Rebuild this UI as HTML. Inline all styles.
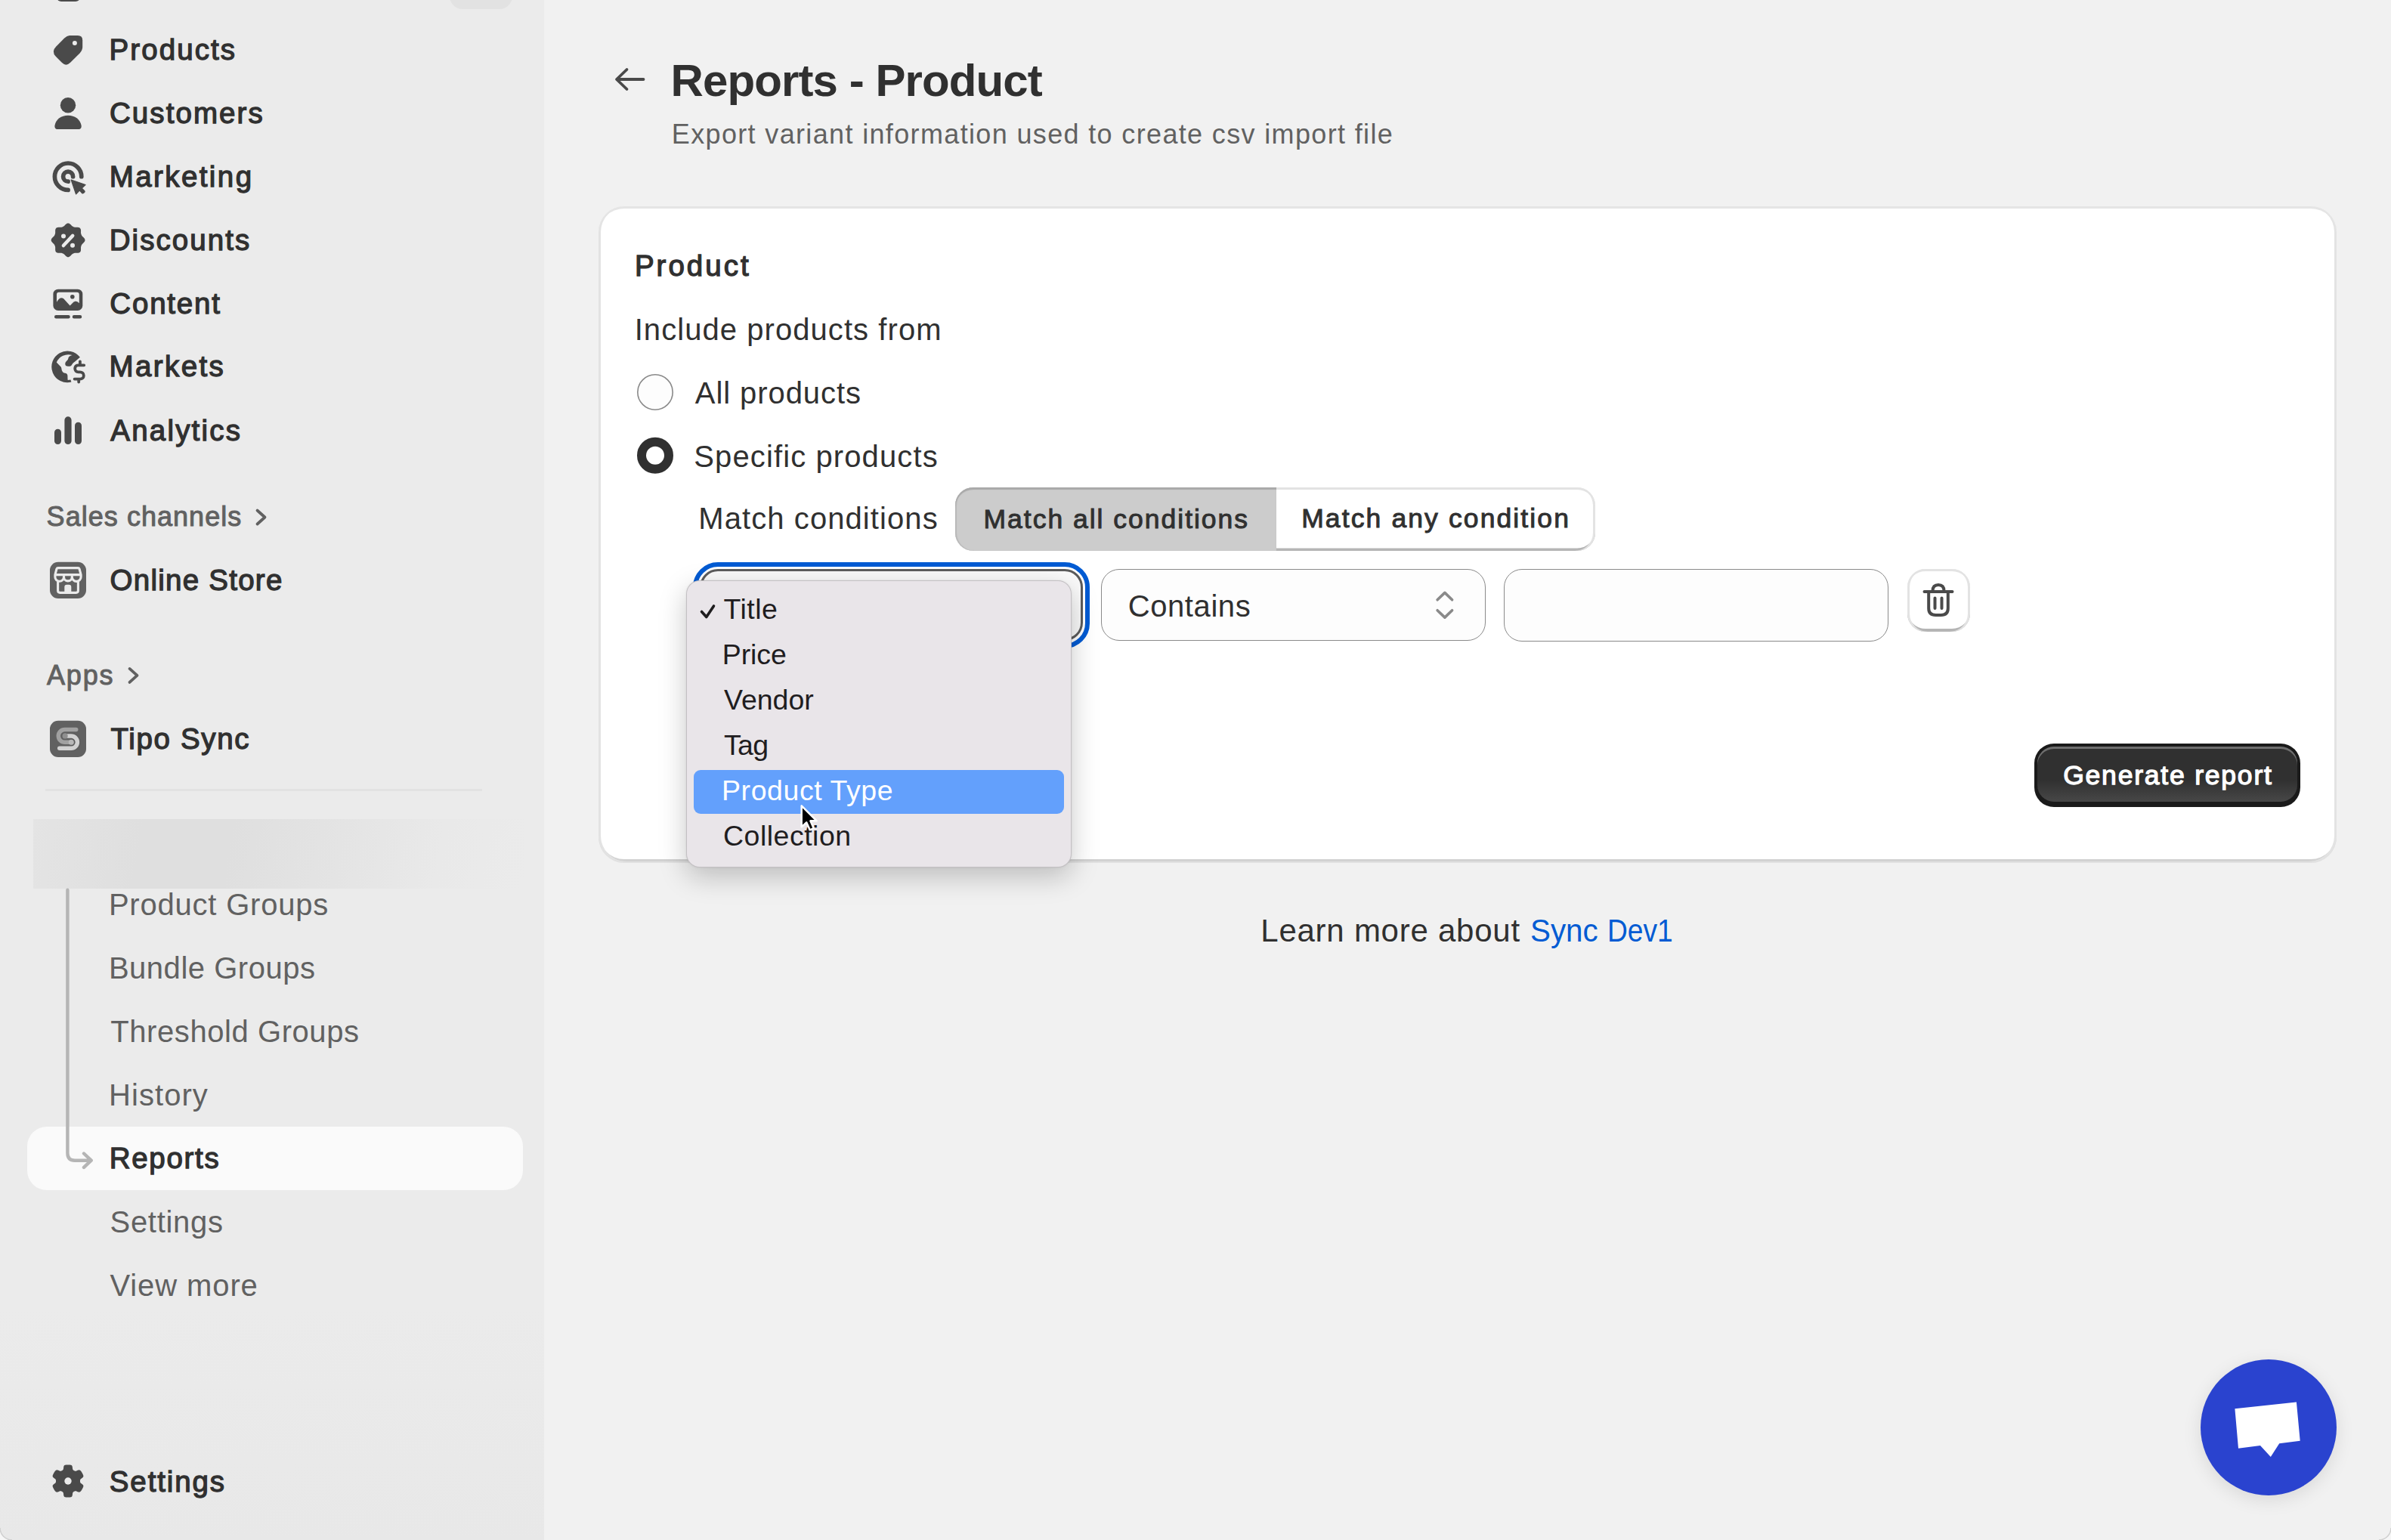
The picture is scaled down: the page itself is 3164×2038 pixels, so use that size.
<!DOCTYPE html>
<html><head><meta charset="utf-8">
<style>
html,body{margin:0;padding:0}
body{width:3164px;height:2038px;overflow:hidden;position:relative;background:#f1f1f1;font-family:"Liberation Sans",sans-serif}
.a{position:absolute;box-sizing:border-box}
.t{position:absolute;white-space:pre;line-height:1;font-family:"Liberation Sans",sans-serif}
.ov{position:absolute;left:0;top:0;overflow:visible}
</style></head><body>
<div class=a style="left:0;top:0;width:720px;height:2038px;background:linear-gradient(#ebebeb 0%,#ebebeb 85%,#e8e8e8 100%)"></div>
<!-- divider -->
<div class=a style="left:60.4px;top:1043.6px;width:577.2px;height:3px;background:#e2e2e2"></div>
<!-- blurred block -->
<div class=a style="left:44px;top:1084px;width:649px;height:91.5px;background:linear-gradient(100deg,#e4e4e4 0%,#dfdfdf 22%,#dfdfdf 40%,#e4e4e4 62%,#e9e9e9 82%,#ebebeb 100%)"></div>
<!-- reports highlight -->
<div class=a style="left:36.3px;top:1491.2px;width:655.7px;height:83.8px;border-radius:26px;background:#fafafa"></div>
<svg class=ov width="720" height="2038" viewBox="0 0 720 2038">
<rect x="75" y="-20" width="31" height="22" rx="6" fill="#4a4a4a"/>
<rect x="595" y="-22" width="83" height="34" rx="17" fill="#e2e2e2"/>
<path d="M92 47.1 L103 47.1 Q109.2 47.1 109.2 53.3 L109.2 62 Q109.2 66.7 105.5 70.4 L93.1 82.8 Q87.45 88.45 81.8 82.8 L74.1 75.1 Q67.4 68.4 74.1 61.7 L85.2 50.6 Q88.7 47.1 92 47.1 Z" fill="#4a4a4a"/>
<circle cx="98.9" cy="56.9" r="3" fill="#ebebeb"/>
<circle cx="90" cy="139.3" r="10.2" fill="#4a4a4a"/>
<path d="M72.5 166 C74 158 81 152.8 90 152.8 C99 152.8 106 158 107.6 166 C108.2 169 106.5 171 104 171 L76 171 C73.5 171 72 169 72.5 166 Z" fill="#4a4a4a"/>
<path d="M107.8 233.7 A17.7 17.7 0 1 0 90.1 251.4" fill="none" stroke="#4a4a4a" stroke-width="5.7" stroke-linecap="round"/>
<path d="M96.6 233.7 A6.5 6.5 0 1 0 90.1 240.2" fill="none" stroke="#4a4a4a" stroke-width="5.7" stroke-linecap="round"/>
<path d="M94.2 238 L113 244.6 L108.3 249.1 L111.8 252.8 Q112.4 253.6 111.6 254.4 L110.2 255.6 Q109.4 256.2 108.7 255.5 L105.3 251.9 L100.6 256.9 Z" fill="#4a4a4a" stroke="#4a4a4a" stroke-width="1.3" stroke-linejoin="round"/>
<path d="M112.50,317.80 L112.44,318.39 L112.28,318.96 L112.02,319.52 L111.67,320.07 L111.26,320.59 L110.80,321.08 L110.33,321.55 L109.85,322.00 L109.41,322.43 L108.99,322.86 L108.63,323.29 L108.32,323.72 L108.06,324.16 L107.85,324.61 L107.65,325.07 L107.47,325.53 L107.30,326.00 L107.17,326.50 L107.09,327.02 L107.04,327.58 L107.03,328.17 L107.04,328.80 L107.05,329.45 L107.06,330.12 L107.03,330.79 L106.95,331.45 L106.82,332.08 L106.61,332.66 L106.31,333.19 L105.94,333.64 L105.49,334.01 L104.96,334.31 L104.38,334.52 L103.75,334.65 L103.09,334.73 L102.42,334.76 L101.75,334.75 L101.10,334.74 L100.47,334.73 L99.88,334.74 L99.32,334.79 L98.80,334.87 L98.30,335.00 L97.83,335.17 L97.37,335.35 L96.91,335.55 L96.46,335.76 L96.02,336.02 L95.59,336.33 L95.16,336.69 L94.73,337.11 L94.30,337.55 L93.85,338.03 L93.38,338.50 L92.89,338.96 L92.37,339.37 L91.82,339.72 L91.26,339.98 L90.69,340.14 L90.10,340.20 L89.51,340.14 L88.94,339.98 L88.38,339.72 L87.83,339.37 L87.31,338.96 L86.82,338.50 L86.35,338.03 L85.90,337.55 L85.47,337.11 L85.04,336.69 L84.61,336.33 L84.18,336.02 L83.74,335.76 L83.29,335.55 L82.83,335.35 L82.37,335.17 L81.90,335.00 L81.40,334.87 L80.88,334.79 L80.32,334.74 L79.73,334.73 L79.10,334.74 L78.45,334.75 L77.78,334.76 L77.11,334.73 L76.45,334.65 L75.82,334.52 L75.24,334.31 L74.71,334.01 L74.26,333.64 L73.89,333.19 L73.59,332.66 L73.38,332.08 L73.25,331.45 L73.17,330.79 L73.14,330.12 L73.15,329.45 L73.16,328.80 L73.17,328.17 L73.16,327.58 L73.11,327.02 L73.03,326.50 L72.90,326.00 L72.73,325.53 L72.55,325.07 L72.35,324.61 L72.14,324.16 L71.88,323.72 L71.57,323.29 L71.21,322.86 L70.79,322.43 L70.35,322.00 L69.87,321.55 L69.40,321.08 L68.94,320.59 L68.53,320.07 L68.18,319.52 L67.92,318.96 L67.76,318.39 L67.70,317.80 L67.76,317.21 L67.92,316.64 L68.18,316.08 L68.53,315.53 L68.94,315.01 L69.40,314.52 L69.87,314.05 L70.35,313.60 L70.79,313.17 L71.21,312.74 L71.57,312.31 L71.88,311.88 L72.14,311.44 L72.35,310.99 L72.55,310.53 L72.73,310.07 L72.90,309.60 L73.03,309.10 L73.11,308.58 L73.16,308.02 L73.17,307.43 L73.16,306.80 L73.15,306.15 L73.14,305.48 L73.17,304.81 L73.25,304.15 L73.38,303.52 L73.59,302.94 L73.89,302.41 L74.26,301.96 L74.71,301.59 L75.24,301.29 L75.82,301.08 L76.45,300.95 L77.11,300.87 L77.78,300.84 L78.45,300.85 L79.10,300.86 L79.73,300.87 L80.32,300.86 L80.88,300.81 L81.40,300.73 L81.90,300.60 L82.37,300.43 L82.83,300.25 L83.29,300.05 L83.74,299.84 L84.18,299.58 L84.61,299.27 L85.04,298.91 L85.47,298.49 L85.90,298.05 L86.35,297.57 L86.82,297.10 L87.31,296.64 L87.83,296.23 L88.38,295.88 L88.94,295.62 L89.51,295.46 L90.10,295.40 L90.69,295.46 L91.26,295.62 L91.82,295.88 L92.37,296.23 L92.89,296.64 L93.38,297.10 L93.85,297.57 L94.30,298.05 L94.73,298.49 L95.16,298.91 L95.59,299.27 L96.02,299.58 L96.46,299.84 L96.91,300.05 L97.37,300.25 L97.83,300.43 L98.30,300.60 L98.80,300.73 L99.32,300.81 L99.88,300.86 L100.47,300.87 L101.10,300.86 L101.75,300.85 L102.42,300.84 L103.09,300.87 L103.75,300.95 L104.38,301.08 L104.96,301.29 L105.49,301.59 L105.94,301.96 L106.31,302.41 L106.61,302.94 L106.82,303.52 L106.95,304.15 L107.03,304.81 L107.06,305.48 L107.05,306.15 L107.04,306.80 L107.03,307.43 L107.04,308.02 L107.09,308.58 L107.17,309.10 L107.30,309.60 L107.47,310.07 L107.65,310.53 L107.85,310.99 L108.06,311.44 L108.32,311.88 L108.63,312.31 L108.99,312.74 L109.41,313.17 L109.85,313.60 L110.33,314.05 L110.80,314.52 L111.26,315.01 L111.67,315.53 L112.02,316.08 L112.28,316.64 L112.44,317.21 Z" fill="#4a4a4a"/>
<circle cx="84" cy="312.6" r="3" fill="#ebebeb"/><circle cx="96" cy="324.7" r="3" fill="#ebebeb"/>
<path d="M96.2 311.9 L83.9 325" stroke="#ebebeb" stroke-width="4.5" stroke-linecap="round"/>
<rect x="70.4" y="382.7" width="38.9" height="28.3" rx="6.5" fill="#4a4a4a"/>
<path d="M75 399.8 C77 396.2 79 394.2 81.5 394.2 C83.3 394.2 84.5 395.3 86 397.3 L92.6 404.4 L96.8 400.3 C98.6 398.6 100.8 398.3 102.8 399.6 L104.8 401.2 L104.8 389.7 Q104.8 386.7 101.8 386.7 L78 386.7 Q75 386.7 75 389.7 Z" fill="#ebebeb"/>
<circle cx="95.8" cy="392.7" r="2.8" fill="#4a4a4a"/>
<path d="M74.2 419.3 L90.5 419.3 M98 419.3 L106 419.3" stroke="#4a4a4a" stroke-width="4.5" stroke-linecap="round"/>
<path d="M105.9 472.8 A20.9 20.9 0 1 0 94.4 505.6 L93.4 502.5 L89.7 502.9 C89.3 500 89.6 497.5 89.3 496.5 C88.8 494.8 87.8 494.1 86 493.8 C84.5 493.5 83 492.5 82 490.4 C81.3 488.8 81.6 487.3 80.8 485.8 L74.8 479.6 A16.7 16.7 0 0 1 95.7 470.1 C93 470.8 91.5 471.6 90.7 473 C90.2 474.5 90.3 475.5 89.3 476.5 L87 479 C86 480.5 86 482.5 87 483.8 C87.6 484.5 88.5 484.7 89.5 484.7 L92.5 484.7 C93.6 484.7 94.5 484 95.2 482.6 C96 481 97.5 479.5 99.8 478 L105.9 472.8 Z" fill="#4a4a4a"/>
<path d="M111.2 483.3 L103 483.3 C100.5 483.3 99.2 485.5 99.2 487.8 C99.2 490.5 101 492.3 103.8 492.3 L105.8 492.3 C108.8 492.3 110.8 494.3 110.8 497 C110.8 499.8 108.8 501.6 105.8 501.6 L98.6 501.6 M105.9 478.3 L105.9 483 M104.2 502 L104.2 505.5" fill="none" stroke="#4a4a4a" stroke-width="3.8" stroke-linecap="round"/>
<rect x="72" y="567.8" width="9" height="20.2" rx="4.5" fill="#4a4a4a"/>
<rect x="85.4" y="551.3" width="9.2" height="36.7" rx="4.6" fill="#4a4a4a"/>
<rect x="99" y="558.8" width="9" height="29.2" rx="4.5" fill="#4a4a4a"/>
<path d="M340.5 675.5 L350.5 684.5 L340.5 693.5" fill="none" stroke="#616161" stroke-width="3.8" stroke-linecap="round" stroke-linejoin="round"/>
<path d="M171.5 884.9 L181.5 893.9 L171.5 902.9" fill="none" stroke="#616161" stroke-width="3.8" stroke-linecap="round" stroke-linejoin="round"/>
<rect x="66" y="743.8" width="48" height="48.2" rx="11" fill="#616161"/>
<path d="M76.8 751.6 L103.2 751.6 Q104.6 751.6 105.1 753 L107.1 760.6 L72.9 760.6 L74.9 753 Q75.4 751.6 76.8 751.6 Z M72.9 760.6 L72.9 763.5 A5.8 5.8 0 0 0 84.5 763.5 L84.5 760.6 M84.5 763.5 A5.4 5.4 0 0 0 95.3 763.5 L95.3 760.6 M95.3 763.5 A5.9 5.9 0 0 0 107.1 763.5 L107.1 760.6 M76.6 768.3 L76.6 781.6 Q76.6 784.4 79.4 784.4 L100.6 784.4 Q103.4 784.4 103.4 781.6 L103.4 768.3" fill="none" stroke="#ebebeb" stroke-width="3.1" stroke-linejoin="round"/>
<path d="M85.3 784.4 L85.3 776.8 Q85.3 773.8 88.3 773.8 L91.3 773.8 Q94.3 773.8 94.3 776.8 L94.3 784.4 Z" fill="#ebebeb"/>
<rect x="66" y="953.8" width="48" height="48.2" rx="11" fill="#616161"/>
<path d="M100.7 965.5 L85.7 965.5 A8.4 8.4 0 0 0 85.7 982.3 L94.3 982.3" fill="none" stroke="#a1a1a1" stroke-width="5.5" stroke-linecap="round"/>
<path d="M94.3 974.1 A8.1 8.1 0 0 1 94.3 990.3" fill="none" stroke="#5e5e5e" stroke-width="8.6"/>
<path d="M86.1 974.1 L94.3 974.1 A8.1 8.1 0 0 1 94.3 990.3 L78.7 990.3" fill="none" stroke="#d2d2d2" stroke-width="5.5" stroke-linecap="round"/>
<circle cx="86.1" cy="973.9" r="3.6" fill="#8f8f8f"/>
<circle cx="94.3" cy="982.3" r="3.5" fill="#b9b9b9"/>
<path d="M89.4 1177.7 L89.4 1526 Q89.4 1535.7 99 1535.7 L120.5 1535.7 M111 1526.5 L120.7 1535.7 L111 1544.9" fill="none" stroke="#b5b5b5" stroke-width="4.4" stroke-linecap="round" stroke-linejoin="round"/>
<path d="M106.00,1960.00 L106.01,1960.42 L106.03,1960.84 L106.09,1961.27 L106.21,1961.70 L106.45,1962.17 L106.90,1962.68 L107.64,1963.27 L108.60,1963.95 L109.50,1964.68 L110.09,1965.38 L110.34,1966.03 L110.37,1966.62 L110.28,1967.18 L110.13,1967.73 L109.94,1968.26 L109.72,1968.78 L109.49,1969.30 L109.24,1969.81 L108.98,1970.31 L108.71,1970.80 L108.42,1971.29 L108.11,1971.76 L107.80,1972.23 L107.47,1972.69 L107.12,1973.14 L106.76,1973.57 L106.36,1973.97 L105.92,1974.33 L105.39,1974.60 L104.71,1974.71 L103.80,1974.55 L102.72,1974.13 L101.65,1973.64 L100.77,1973.30 L100.10,1973.16 L99.58,1973.18 L99.14,1973.30 L98.74,1973.46 L98.37,1973.65 L98.00,1973.86 L97.64,1974.07 L97.29,1974.30 L96.95,1974.57 L96.63,1974.89 L96.35,1975.33 L96.13,1975.98 L95.99,1976.91 L95.88,1978.08 L95.70,1979.23 L95.38,1980.09 L94.95,1980.63 L94.45,1980.95 L93.92,1981.16 L93.37,1981.30 L92.82,1981.40 L92.26,1981.47 L91.69,1981.53 L91.13,1981.57 L90.57,1981.59 L90.00,1981.60 L89.43,1981.59 L88.87,1981.57 L88.31,1981.53 L87.74,1981.47 L87.18,1981.40 L86.63,1981.30 L86.08,1981.16 L85.55,1980.95 L85.05,1980.63 L84.62,1980.09 L84.30,1979.23 L84.12,1978.08 L84.01,1976.91 L83.87,1975.98 L83.65,1975.33 L83.37,1974.89 L83.05,1974.57 L82.71,1974.30 L82.36,1974.07 L82.00,1973.86 L81.63,1973.65 L81.26,1973.46 L80.86,1973.30 L80.42,1973.18 L79.90,1973.16 L79.23,1973.30 L78.35,1973.64 L77.28,1974.13 L76.20,1974.55 L75.29,1974.71 L74.61,1974.60 L74.08,1974.33 L73.64,1973.97 L73.24,1973.57 L72.88,1973.14 L72.53,1972.69 L72.20,1972.23 L71.89,1971.76 L71.58,1971.29 L71.29,1970.80 L71.02,1970.31 L70.76,1969.81 L70.51,1969.30 L70.28,1968.78 L70.06,1968.26 L69.87,1967.73 L69.72,1967.18 L69.63,1966.62 L69.66,1966.03 L69.91,1965.38 L70.50,1964.68 L71.40,1963.95 L72.36,1963.27 L73.10,1962.68 L73.55,1962.17 L73.79,1961.70 L73.91,1961.27 L73.97,1960.84 L73.99,1960.42 L74.00,1960.00 L73.99,1959.58 L73.97,1959.16 L73.91,1958.73 L73.79,1958.30 L73.55,1957.83 L73.10,1957.32 L72.36,1956.73 L71.40,1956.05 L70.50,1955.32 L69.91,1954.62 L69.66,1953.97 L69.63,1953.38 L69.72,1952.82 L69.87,1952.27 L70.06,1951.74 L70.28,1951.22 L70.51,1950.70 L70.76,1950.19 L71.02,1949.69 L71.29,1949.20 L71.58,1948.71 L71.89,1948.24 L72.20,1947.77 L72.53,1947.31 L72.88,1946.86 L73.24,1946.43 L73.64,1946.03 L74.08,1945.67 L74.61,1945.40 L75.29,1945.29 L76.20,1945.45 L77.28,1945.87 L78.35,1946.36 L79.23,1946.70 L79.90,1946.84 L80.42,1946.82 L80.86,1946.70 L81.26,1946.54 L81.63,1946.35 L82.00,1946.14 L82.36,1945.93 L82.71,1945.70 L83.05,1945.43 L83.37,1945.11 L83.65,1944.67 L83.87,1944.02 L84.01,1943.09 L84.12,1941.92 L84.30,1940.77 L84.62,1939.91 L85.05,1939.37 L85.55,1939.05 L86.08,1938.84 L86.63,1938.70 L87.18,1938.60 L87.74,1938.53 L88.31,1938.47 L88.87,1938.43 L89.43,1938.41 L90.00,1938.40 L90.57,1938.41 L91.13,1938.43 L91.69,1938.47 L92.26,1938.53 L92.82,1938.60 L93.37,1938.70 L93.92,1938.84 L94.45,1939.05 L94.95,1939.37 L95.38,1939.91 L95.70,1940.77 L95.88,1941.92 L95.99,1943.09 L96.13,1944.02 L96.35,1944.67 L96.63,1945.11 L96.95,1945.43 L97.29,1945.70 L97.64,1945.93 L98.00,1946.14 L98.37,1946.35 L98.74,1946.54 L99.14,1946.70 L99.58,1946.82 L100.10,1946.84 L100.77,1946.70 L101.65,1946.36 L102.72,1945.87 L103.80,1945.45 L104.71,1945.29 L105.39,1945.40 L105.92,1945.67 L106.36,1946.03 L106.76,1946.43 L107.12,1946.86 L107.47,1947.31 L107.80,1947.77 L108.11,1948.24 L108.42,1948.71 L108.71,1949.20 L108.98,1949.69 L109.24,1950.19 L109.49,1950.70 L109.72,1951.22 L109.94,1951.74 L110.13,1952.27 L110.28,1952.82 L110.37,1953.38 L110.34,1953.97 L110.09,1954.62 L109.50,1955.32 L108.60,1956.05 L107.64,1956.73 L106.90,1957.32 L106.45,1957.83 L106.21,1958.30 L106.09,1958.73 L106.03,1959.16 L106.01,1959.58 Z" fill="#4a4a4a"/><circle cx="90" cy="1960" r="4.7" fill="#ebebeb"/>
</svg>
<!-- card -->
<div class=a style="left:792px;top:273px;width:2300px;height:867px;border-radius:34px;background:#fff;box-shadow:inset 0 3px 0 #e5e5e5, inset 3px 0 0 #e3e3e3, inset -3px 0 0 #e3e3e3, inset 0 -3px 0 #d2d2d2, 0 2px 0 #e1e1e1"></div>
<!-- segmented control -->
<div class=a style="left:1264px;top:645px;width:424.5px;height:83.5px;border-radius:24px 0 0 24px;background:#cccccc;box-shadow:inset 0 3px 1px #a9a9a9, inset 2px 0 1px #b9b9b9"></div>
<div class=a style="left:1688.5px;top:645px;width:422.5px;height:83.5px;border-radius:0 24px 24px 0;background:#fff;box-shadow:inset 0 3px 0 #e3e3e3, inset -3px 0 0 #e3e3e3, inset 0 -3.5px 0 #b5b5b5"></div>
<!-- focused select -->
<div class=a style="left:916.5px;top:743.8px;width:525.5px;height:113.8px;border-radius:33px;border:6px solid #005bd3;background:#fff"></div>
<div class=a style="left:926px;top:753px;width:507px;height:95.2px;border-radius:24px;border:3px solid #5c5c5c;background:#fafafa"></div>
<!-- contains select -->
<div class=a style="left:1457px;top:753.3px;width:508.6px;height:95px;border-radius:24px;border:1.6px solid #8a8a8a;background:#fdfdfd"></div>
<!-- value input -->
<div class=a style="left:1990px;top:753px;width:509px;height:96px;border-radius:24px;border:1.6px solid #8a8a8a;background:#fdfdfd"></div>
<!-- delete button -->
<div class=a style="left:2523.6px;top:753.4px;width:83px;height:82.8px;border-radius:24px;background:#fff;box-shadow:inset 0 3px 0 #e3e3e3, inset 3px 0 0 #e3e3e3, inset -3px 0 0 #e3e3e3, inset 0 -4px 0 #b5b5b5"></div>
<!-- generate button -->
<div class=a style="left:2692px;top:983.8px;width:352px;height:84px;border-radius:26px;background:#1a1a1a"></div>
<div class=a style="left:2696px;top:988px;width:344px;height:73px;border-radius:22px;background:linear-gradient(#303030 0%,#303030 60%,#474747 100%);box-shadow:inset 0 3px 0 #6e6e6e"></div>
<!-- dropdown -->
<div class=a style="left:907.5px;top:767.5px;width:510.8px;height:380.3px;border-radius:18px;background:#e9e5e9;border:1.5px solid rgba(0,0,0,0.16);box-shadow:0 12px 36px rgba(0,0,0,0.22),0 0 3px rgba(0,0,0,0.08)"></div>
<div class=a style="left:918.2px;top:1018.6px;width:489.4px;height:58.7px;border-radius:9px;background:#63a0fc"></div>
<!-- chat button -->
<div class=a style="left:2912px;top:1799px;width:180px;height:180px;border-radius:50%;background:#2a43cf;box-shadow:0 6px 24px rgba(0,0,0,0.10)"></div>
<svg class=ov width="3164" height="2038" viewBox="0 0 3164 2038">
<path d="M851.5 105 L816.5 105 M829.5 92 L816 105 L829.5 118" fill="none" stroke="#4a4a4a" stroke-width="3.8" stroke-linecap="round" stroke-linejoin="round"/>
</svg>
<svg class=ov width="3164" height="2038" viewBox="0 0 3164 2038">
<circle cx="867" cy="519" r="23.2" fill="#fdfdfd" stroke="#8a8a8a" stroke-width="1.6"/>
<circle cx="867" cy="602.8" r="18" fill="none" stroke="#303030" stroke-width="12"/>
<path d="M1902.1 793.8 L1911.9 784.4 L1921.6 793.8 M1902.1 807.7 L1911.9 817.1 L1921.6 807.7" fill="none" stroke="#8a8a8a" stroke-width="3.6" stroke-linecap="round" stroke-linejoin="round"/>
<path d="M2546.5 783 L2583.5 783 M2552.2 784 L2552.2 805 Q2552.2 814 2561.5 814 L2568.5 814 Q2577.8 814 2577.8 805 L2577.8 784 M2560.5 791.5 L2560.5 805 M2569.5 791.5 L2569.5 805 M2557.5 782 Q2557.5 774 2565 774 Q2572.5 774 2572.5 782" fill="none" stroke="#4a4a4a" stroke-width="4" stroke-linecap="round" stroke-linejoin="round"/>
<path d="M928.5 809.5 L934.8 816.5 L944.5 802" fill="none" stroke="#1f1d1f" stroke-width="3.6" stroke-linecap="round" stroke-linejoin="round"/>
<path d="M2957.4 1864.2 L3038.9 1855.4 L3043.7 1906.8 L3016.2 1910.3 L3004.8 1927.9 L2991.0 1913.0 L2962.0 1916.7 Z" fill="#ffffff"/>
<path d="M0 2022 A16 16 0 0 0 16 2038 L0 2038 Z" fill="#f6f6f6"/><path d="M0 2022 A16 16 0 0 0 16 2038" fill="none" stroke="#cfcfcf" stroke-width="1.5"/>
<path d="M3164 2022 A16 16 0 0 1 3148 2038 L3164 2038 Z" fill="#f6f6f6"/><path d="M3164 2022 A16 16 0 0 1 3148 2038" fill="none" stroke="#cfcfcf" stroke-width="1.5"/>
</svg>
<div class=t style="left:144.5px;top:46.9px;font-size:38.5px;font-weight:400;color:#303030;letter-spacing:2.09px;-webkit-text-stroke:1.3px #303030;">Products</div>
<div class=t style="left:145.0px;top:130.9px;font-size:38.5px;font-weight:400;color:#303030;letter-spacing:2.07px;-webkit-text-stroke:1.3px #303030;">Customers</div>
<div class=t style="left:144.7px;top:214.7px;font-size:38.5px;font-weight:400;color:#303030;letter-spacing:2.42px;-webkit-text-stroke:1.3px #303030;">Marketing</div>
<div class=t style="left:144.7px;top:298.8px;font-size:38.5px;font-weight:400;color:#303030;letter-spacing:2.08px;-webkit-text-stroke:1.3px #303030;">Discounts</div>
<div class=t style="left:145.3px;top:382.6px;font-size:38.5px;font-weight:400;color:#303030;letter-spacing:1.81px;-webkit-text-stroke:1.3px #303030;">Content</div>
<div class=t style="left:144.5px;top:466.3px;font-size:38.5px;font-weight:400;color:#303030;letter-spacing:2.41px;-webkit-text-stroke:1.3px #303030;">Markets</div>
<div class=t style="left:146.3px;top:550.8px;font-size:38.5px;font-weight:400;color:#303030;letter-spacing:2.20px;-webkit-text-stroke:1.3px #303030;">Analytics</div>
<div class=t style="left:61.6px;top:666.0px;font-size:36px;font-weight:400;color:#616161;letter-spacing:1.04px;-webkit-text-stroke:1.0px #616161;">Sales channels</div>
<div class=t style="left:145.5px;top:749.1px;font-size:38.5px;font-weight:400;color:#303030;letter-spacing:1.26px;-webkit-text-stroke:1.3px #303030;">Online Store</div>
<div class=t style="left:62.0px;top:876.1px;font-size:36px;font-weight:400;color:#616161;letter-spacing:1.82px;-webkit-text-stroke:1.0px #616161;">Apps</div>
<div class=t style="left:146.5px;top:959.3px;font-size:38.5px;font-weight:400;color:#303030;letter-spacing:1.67px;-webkit-text-stroke:1.3px #303030;">Tipo Sync</div>
<div class=t style="left:143.9px;top:1177.1px;font-size:40px;font-weight:400;color:#616161;letter-spacing:0.79px;">Product Groups</div>
<div class=t style="left:143.9px;top:1260.7px;font-size:40px;font-weight:400;color:#616161;letter-spacing:0.52px;">Bundle Groups</div>
<div class=t style="left:146.3px;top:1345.1px;font-size:40px;font-weight:400;color:#616161;letter-spacing:0.57px;">Threshold Groups</div>
<div class=t style="left:144.0px;top:1429.1px;font-size:40px;font-weight:400;color:#616161;letter-spacing:1.06px;">History</div>
<div class=t style="left:144.7px;top:1513.8px;font-size:38.5px;font-weight:400;color:#303030;letter-spacing:1.69px;-webkit-text-stroke:1.3px #303030;">Reports</div>
<div class=t style="left:145.5px;top:1597.1px;font-size:40px;font-weight:400;color:#616161;letter-spacing:0.71px;">Settings</div>
<div class=t style="left:145.5px;top:1681.1px;font-size:40px;font-weight:400;color:#616161;letter-spacing:0.89px;">View more</div>
<div class=t style="left:144.8px;top:1941.8px;font-size:38.5px;font-weight:400;color:#303030;letter-spacing:1.88px;-webkit-text-stroke:1.3px #303030;">Settings</div>
<div class=t style="left:887.6px;top:77.0px;font-size:60px;font-weight:700;color:#303030;letter-spacing:-0.91px;">Reports - Product</div>
<div class=t style="left:888.8px;top:160.0px;font-size:36px;font-weight:400;color:#616161;letter-spacing:1.35px;">Export variant information used to create csv import file</div>
<div class=t style="left:839.9px;top:333.4px;font-size:38.5px;font-weight:400;color:#303030;letter-spacing:3.00px;-webkit-text-stroke:1.3px #303030;">Product</div>
<div class=t style="left:839.7px;top:416.4px;font-size:40px;font-weight:400;color:#303030;letter-spacing:1.06px;">Include products from</div>
<div class=t style="left:919.8px;top:499.6px;font-size:40px;font-weight:400;color:#303030;letter-spacing:0.93px;">All products</div>
<div class=t style="left:918.3px;top:584.1px;font-size:40px;font-weight:400;color:#303030;letter-spacing:1.11px;">Specific products</div>
<div class=t style="left:924.3px;top:665.7px;font-size:40px;font-weight:400;color:#303030;letter-spacing:1.08px;">Match conditions</div>
<div class=t style="left:1301.5px;top:669.8px;font-size:35.5px;font-weight:400;color:#303030;letter-spacing:1.99px;-webkit-text-stroke:1.0px #303030;">Match all conditions</div>
<div class=t style="left:1722.2px;top:669.2px;font-size:35.5px;font-weight:400;color:#303030;letter-spacing:2.11px;-webkit-text-stroke:1.0px #303030;">Match any condition</div>
<div class=t style="left:1492.7px;top:782.4px;font-size:40px;font-weight:400;color:#303030;letter-spacing:0.59px;">Contains</div>
<div class=t style="left:2730.2px;top:1008.8px;font-size:35.5px;font-weight:400;color:#ffffff;letter-spacing:1.79px;-webkit-text-stroke:1.3px #ffffff;">Generate report</div>
<div class=t style="left:1668.3px;top:1210.9px;font-size:42px;font-weight:400;color:#303030;letter-spacing:0.75px;">Learn more about</div>
<div class=t style="left:2025.4px;top:1210.9px;font-size:42px;font-weight:400;color:#005bd3;letter-spacing:0.00px;transform:scaleX(0.9609);transform-origin:0 0;">Sync</div>
<div class=t style="left:2126.6px;top:1210.9px;font-size:42px;font-weight:400;color:#005bd3;letter-spacing:0.00px;transform:scaleX(0.8838);transform-origin:0 0;">Dev1</div>
<div class=t style="left:957.6px;top:788.3px;font-size:37.5px;font-weight:400;color:#1f1d1f;letter-spacing:0.45px;">Title</div>
<div class=t style="left:955.7px;top:848.3px;font-size:37.5px;font-weight:400;color:#1f1d1f;letter-spacing:-0.07px;">Price</div>
<div class=t style="left:958.0px;top:908.2px;font-size:37.5px;font-weight:400;color:#1f1d1f;letter-spacing:-0.03px;">Vendor</div>
<div class=t style="left:958.0px;top:968.1px;font-size:37.5px;font-weight:400;color:#1f1d1f;letter-spacing:-0.65px;">Tag</div>
<div class=t style="left:955.0px;top:1027.9px;font-size:37.5px;font-weight:400;color:#ffffff;letter-spacing:0.58px;">Product Type</div>
<div class=t style="left:957.0px;top:1088.2px;font-size:37.5px;font-weight:400;color:#1f1d1f;letter-spacing:0.50px;">Collection</div>
<svg class=ov width="3164" height="2038" viewBox="0 0 3164 2038"><g transform="translate(1060.7,1066.3)"><path d="M0 0 L0 28 L6.5 22 L11 32 L16 29.8 L11.7 20 L20 20 Z" fill="#000" stroke="#fff" stroke-width="2.5" stroke-linejoin="round"/></g></svg>
</body></html>
